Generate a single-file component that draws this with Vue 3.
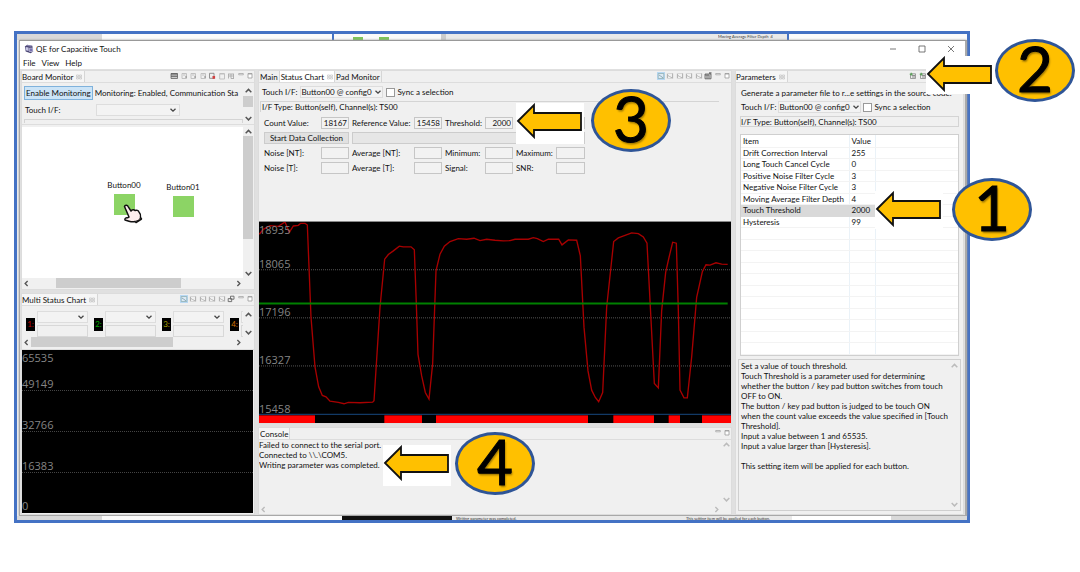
<script setup>
import { ref } from 'vue'

const sel = ref('Button00 @ config0')
const sync = ref(false)
const sync2 = ref(false)

const boardIcons = ['table', 'page', 'page', 'page', 'stop', 'page2', 'tree', 'min', 'max']
const chartIcons = ['active', 'wave', 'wave', 'wave', 'wave', 'export', 'min', 'max']
const multiIcons = ['active', 'wave', 'wave', 'wave', 'wave', 'windows', 'min', 'max']

const params = [
  ['Drift Correction Interval', '255'],
  ['Long Touch Cancel Cycle', '0'],
  ['Positive Noise Filter Cycle', '3'],
  ['Negative Noise Filter Cycle', '3'],
  ['Moving Average Filter Depth', '4'],
  ['Touch Threshold', '2000'],
  ['Hysteresis', '99'],
]
const measures = [
  ['Noise [NT]:', 'Average [NT]:', 'Minimum:', 'Maximum:'],
  ['Noise [T]:', 'Average [T]:', 'Signal:', 'SNR:'],
]
const channels = [
  { n: '1:', c: '#c00000' },
  { n: '2:', c: '#00b000' },
  { n: '3:', c: '#a8a000' },
  { n: '4:', c: '#d07000' },
]
const touchBars = [[0, 168], [376, 489], [531, 987], [1063, 1185], [1229, 1263], [1329, 1416]]
const curve = '28,70 40,55 60,44 85,46 105,33 118,64 130,45 145,43 152,37 165,37 172,42 183,320 195,470 206,530 217,556 228,560 240,573 265,577 282,581 295,577 330,578 368,576 372,572 390,290 404,145 415,131 430,120 448,106 460,108 483,108 493,117 499,280 504,432 515,497 526,547 537,567 548,460 558,180 570,130 583,106 600,92 625,83 650,85 672,82 690,89 710,85 735,88 760,90 780,89 795,85 835,85 850,80 862,83 880,92 895,85 926,85 936,102 955,87 980,88 991,135 1002,350 1014,482 1025,540 1036,562 1046,575 1058,547 1070,290 1091,92 1105,81 1145,66 1165,68 1180,78 1191,97 1213,520 1225,533 1235,300 1247,185 1257,140 1268,94 1279,97 1285,300 1290,540 1302,563 1312,563 1325,440 1340,260 1357,183 1368,162 1380,163 1398,156 1415,160 1433,161'
const help = `Set a value of touch threshold.
Touch Threshold is a parameter used for determining
whether the button / key pad button switches from touch
OFF to ON.
The button / key pad button is judged to be touch ON
when the count value exceeds the value specified in [Touch
Threshold].
Input a value between 1 and 65535.
Input a value larger than [Hysteresis].

This setting item will be applied for each button.`
const log = `Failed to connect to the serial port.
Connected to \\\\.\\COM5.
Writing parameter was completed.`
</script>

<template>
  <svg class="defs" aria-hidden="true">
    <symbol id="up" viewBox="0 0 8 8"><path d="M1.5 5.5 4 3l2.500 2.500" fill="none" stroke="currentColor" stroke-width="1.300" /></symbol>
    <symbol id="down" viewBox="0 0 8 8"><path d="M1.500 2.700 4 5.200l2.500-2.500" fill="none" stroke="currentColor" stroke-width="1.300" /></symbol>
    <symbol id="left" viewBox="0 0 8 8"><path d="M5 1.800 2.800 4 5 6.200" fill="none" stroke="currentColor" stroke-width="1.200" /></symbol>
    <symbol id="right" viewBox="0 0 8 8"><path d="M3 1.800 5.200 4 3 6.200" fill="none" stroke="currentColor" stroke-width="1.200" /></symbol>
    <symbol id="mark" viewBox="0 0 6 6"><path d="M.5 1h2v1.500h-2zM3.500 1h2v1.500h-2zM.5 3.500h2V5h-2zM3.500 3.500h2V5h-2z" fill="none" stroke="#bbb" stroke-width=".6" /></symbol>
    <symbol id="i-table" viewBox="0 0 8 8"><path d="M1 1.500h6.500v5H1z" fill="#ccc" stroke="#666" stroke-width=".8" /><path d="M1 2h6.500M1 4.200h6.500" stroke="#555" /></symbol>
    <symbol id="i-page" viewBox="0 0 8 8"><path d="M2 1.500h4.500v5H2zM3 3h2.500" fill="none" stroke="#bbb" stroke-width=".9" /><path d="M5 5h2" stroke="#888" /></symbol>
    <symbol id="i-page2" viewBox="0 0 8 8"><path d="M1.700 1.500h4.800v5.500H1.700zM2 2h4" fill="none" stroke="#bbb" stroke-width=".9" /></symbol>
    <symbol id="i-stop" viewBox="0 0 8 8"><path d="M1.500 1.300h4.500v5H1.500z" fill="#eee" stroke="#888" stroke-width=".9" /><path d="M4.500 4h2.600v2.800H4.500z" fill="#d04040" /></symbol>
    <symbol id="i-tree" viewBox="0 0 8 8"><path d="M1 2h6M2 4h5M1.500 2v4.500M4 2v4.500h3M6.500 2v4.500" fill="none" stroke="#aaa" stroke-width=".9" /></symbol>
    <symbol id="i-min" viewBox="0 0 8 8"><path d="M1.700 1.500h4.600v1.300H1.700z" fill="#fff" stroke="#999" stroke-width=".7" /></symbol>
    <symbol id="i-max" viewBox="0 0 8 8"><path d="M2 1.500h4v4.500H2zM2 2h4" fill="#fff" stroke="#999" stroke-width=".8" /></symbol>
    <symbol id="i-wave" viewBox="0 0 8 8"><path d="M1.200 1.500h5.600v5H1.200z" fill="none" stroke="#ccc" stroke-width=".7" /><path d="M1.500 2v4M2 3.500l1.500 1L6.500 6M6.500 1.500v4.500" fill="none" stroke="#aaa" stroke-width=".8" /></symbol>
    <symbol id="i-active" viewBox="0 0 8 8"><path d="M0 0h8v8H0z" fill="#b8d8f4" /><path d="M1.200 1.500h5.600v5H1.200z" fill="#dde9f3" stroke="#8aa" stroke-width=".7" /><path d="M2 3l1.500 1L6 5.800" fill="none" stroke="#79a" stroke-width=".8" /></symbol>
    <symbol id="i-export" viewBox="0 0 8 8"><path d="M1 2h6v4.800H1zM1 3h4M3 3v3.500M5 3v3.500" fill="#ddd" stroke="#555" stroke-width=".8" /><path d="M5 1h2.500" stroke="#333" /></symbol>
    <symbol id="i-windows" viewBox="0 0 8 8"><path d="M3.500 1.200H7v3H3.500zM1.200 3.600h3.500v3H1.200z" fill="#eee" stroke="#666" stroke-width=".9" /></symbol>
    <symbol id="i-gen" viewBox="0 0 8 8"><path d="M1.500 1.800h5v4.700h-5z" fill="#eee" stroke="#888" stroke-width=".8" /><path d="M3 3.500h3M3 5h3" stroke="#666" stroke-width=".7" /><path d="M.7 2.200h3M2.200.7v3" stroke="#4a9c4a" stroke-width=".9" /></symbol>
  </svg>

  <main class="page">
    <section class="frame">
      <div class="strip top">
        <i class="grey s1"></i><i class="blank s2"></i>
        <i class="greens"><b></b><b></b></i>
        <i class="grey s3"></i>
        <span class="tiny">Moving Average Filter Depth&nbsp; 4</span><i class="blank edge"></i>
      </div>

      <div class="window">
        <header class="title">
          <svg class="logo" viewBox="0 0 12 12"><path d="M1 3l3-2 6 1 1 7-3 2-6-2z" fill="#4a4674" /><path d="M2 3.500l3.500.8v4L2 7.500z" fill="#c9c7e6" /><path d="M6.500 5h4v4h-4z" fill="#7770b0" stroke="#dcdcf0" stroke-width=".7" /><path d="M4 1.800l5 .7" stroke="#aaa6d0" /></svg>
          <span>QE for Capacitive Touch</span>
          <div class="wbtns">
            <button aria-label="Minimize"><svg viewBox="0 0 8 8"><path d="M1 4h6" /></svg></button>
            <button aria-label="Maximize"><svg viewBox="0 0 8 8"><path d="M1 1h6v6H1z" /></svg></button>
            <button aria-label="Close"><svg viewBox="0 0 8 8"><path d="M1 1l6 6M7 1 1 7" /></svg></button>
          </div>
        </header>
        <nav class="menu"><button>File</button><button>View</button><button>Help</button></nav>

        <div class="work">
          <div class="col left">
            <section class="pane board">
              <div class="tabs">
                <button class="tab on">Board Monitor <svg class="mk"><use href="#mark" /></svg></button>
                <div class="icons nine"><svg v-for="(i, k) in boardIcons" :key="k"><use :href="'#i-' + i" /></svg></div>
              </div>
              <div class="bar-area">
                <div class="bar-body">
                  <div class="row"><button class="primary">Enable Monitoring</button><span>Monitoring: Enabled, Communication Sta</span></div>
                  <div class="row second"><label for="bif">Touch I/F:</label>
                    <span class="combo wide"><select id="bif"><option></option></select><svg><use href="#down" /></svg></span></div>
                  <div class="cutbox"></div>
                </div>
                <div class="vs"><svg><use href="#up" /></svg><i class="t1"></i><svg><use href="#down" /></svg></div>
              </div>
              <div class="canvas-wrap">
                <div class="canvas">
                  <div class="node n0"><span>Button00</span><i></i></div>
                  <div class="node n1"><span>Button01</span><i></i></div>
                  <svg class="hand" viewBox="0 0 20 20"><path d="M1.500 2.500C2 .5 4.500.8 5.300 2.800L8 7c1-1.500 3-1.700 4-.5 1.500-.8 3.500 0 4 1.500 1.500 1.500 1.700 3.500 1.500 5.500l1 1.500-5.500 3.500-1-1c-2 .8-4 .3-6-.3L2 16c-.7-1.500 1-2.500 2.500-2.200L6 13z" fill="#fdeeee" stroke="#111" stroke-width="1.500" stroke-linejoin="round" /><path d="M12.500 17c2 0 4-1.200 5-3.500" fill="none" stroke="#111" stroke-width=".8" /></svg>
                </div>
                <div class="vs"><svg><use href="#up" /></svg><i class="t2"></i><em></em><svg><use href="#down" /></svg></div>
                <div class="hs"><svg><use href="#left" /></svg><em class="h1"></em><i class="h2"></i><em class="h3"></em><svg><use href="#right" /></svg></div>
              </div>
            </section>
            <section class="pane multi">
              <div class="tabs">
                <button class="tab on">Multi Status Chart <svg class="mk"><use href="#mark" /></svg></button>
                <div class="icons eight"><svg v-for="(i, k) in multiIcons" :key="k"><use :href="'#i-' + i" /></svg></div>
              </div>
              <div class="channels">
                <div class="chs">
                  <div v-for="c in channels" :key="c.n" class="ch">
                    <label :for="'ch' + c.n" :style="{ color: c.c }">{{ c.n }}</label>
                    <div class="chf">
                      <span class="combo"><select :id="'ch' + c.n"><option></option></select><svg><use href="#down" /></svg></span>
                      <div class="under"></div>
                    </div>
                  </div>
                </div>
                <div class="vs"><svg><use href="#up" /></svg><em></em><svg><use href="#down" /></svg></div>
                <div class="hs"><svg><use href="#left" /></svg><i class="m1"></i><em class="m2"></em><svg><use href="#right" /></svg></div>
              </div>
              <div class="plot mplot">
                <svg class="fill" viewBox="0 0 231 163" preserveAspectRatio="none"><path d="M0 40.500h231M0 81.500h231M0 122.500h231" stroke="#444" stroke-width="1" stroke-dasharray="1 1" /></svg>
                <div class="scale"><span>65535</span><span>49149</span><span>32766</span><span>16383</span><span>0</span></div>
              </div>
            </section>
          </div>

          <div class="col mid">
            <section class="pane status">
              <div class="tabs">
                <button class="tab">Main</button><button class="tab on white">Status Chart <svg class="mk"><use href="#mark" /></svg></button><button class="tab">Pad Monitor</button>
                <div class="icons eight"><svg v-for="(i, k) in chartIcons" :key="k"><use :href="'#i-' + i" /></svg></div>
              </div>
              <div class="status-body">
                <div class="row ifrow"><label for="sif">Touch I/F:</label>
                  <span class="combo cfg"><select id="sif" v-model="sel"><option>Button00 @ config0</option></select><svg><use href="#down" /></svg></span>
                  <label class="chk"><input v-model="sync" type="checkbox">Sync a selection</label></div>
                <div class="type">I/F Type: Button(self), Channel(s): TS00</div>
                <div class="grid">
                  <label for="cv">Count Value:</label><input id="cv" readonly value="18167">
                  <label for="rv">Reference Value:</label><input id="rv" readonly value="15458">
                  <label for="th">Threshold:</label><input id="th" readonly value="2000">
                  <span></span><input aria-label="Status" readonly>
                  <button class="start">Start Data Collection</button><div class="progress"></div>
                  <template v-for="(r, i) in measures" :key="i">
                    <template v-for="m in r" :key="m"><label :for="m">{{ m }}</label><input :id="m" readonly></template>
                  </template>
                </div>
              </div>
              <div class="plot splot">
                <svg class="fill" viewBox="0 0 1416 606" preserveAspectRatio="none">
                  <path d="M0 144h1416M0 289h1416M0 434h1416" stroke="#555" stroke-width="3" stroke-dasharray="3 3" />
                  <path d="M0 580h1416" stroke="#123a66" stroke-width="4" />
                  <polyline transform="translate(-27 -33)" :points="curve" fill="none" stroke="#a80000" stroke-width="4" />
                  <path d="M0 246h1406" stroke="#008000" stroke-width="6" />
                  <rect v-for="b in touchBars" :key="b[0]" :x="b[0]" y="583" :width="b[1] - b[0]" height="23" fill="#f00" />
                </svg>
                <div class="scale"><span>18935</span><span>18065</span><span>17196</span><span>16327</span><span>15458</span></div>
              </div>
            </section>
            <section class="pane console">
              <div class="tabs"><button class="tab on">Console</button>
                <div class="icons two"><svg><use href="#i-min" /></svg><svg><use href="#i-max" /></svg></div></div>
              <div class="console-body">
                <div class="log">{{ log }}</div>
                <div class="vs faint"><svg><use href="#up" /></svg><em></em><svg><use href="#down" /></svg></div>
                <div class="hs faint"><svg><use href="#left" /></svg><em></em><svg><use href="#right" /></svg></div>
              </div>
            </section>
          </div>

          <div class="col right">
            <section class="pane params">
              <div class="tabs"><button class="tab on">Parameters <svg class="mk"><use href="#mark" /></svg></button>
                <div class="icons gen"><svg><use href="#i-gen" /></svg><svg><use href="#i-gen" /></svg></div></div>
              <div class="params-body">
                <div class="gtext">Generate a parameter file to r...e settings in the source code.</div>
                <div class="row"><label for="pif">Touch I/F:</label>
                  <span class="combo cfg"><select id="pif" v-model="sel"><option>Button00 @ config0</option></select><svg><use href="#down" /></svg></span>
                  <label class="chk"><input v-model="sync2" type="checkbox">Sync a selection</label></div>
                <div class="type">I/F Type: Button(self), Channel(s): TS00</div>
                <div class="tbox">
                  <table>
                    <thead><tr><th class="c1">Item</th><th class="c2">Value</th><th></th></tr></thead>
                    <tbody>
                      <tr v-for="p in params" :key="p[0]" :class="{ picked: p[0] === 'Touch Threshold' }"><td>{{ p[0] }}</td><td>{{ p[1] }}</td><td></td></tr>
                      <tr v-for="n in 11" :key="n"><td></td><td></td><td></td></tr>
                    </tbody>
                  </table>
                </div>
                <div class="help">
                  <div class="log">{{ help }}</div>
                  <div class="vs faint"><svg><use href="#up" /></svg><em></em><svg><use href="#down" /></svg></div>
                </div>
              </div>
            </section>
          </div>
        </div>
      </div>

      <div class="strip bottom">
        <i class="grey s1"></i><i class="blank b2"></i><i class="black"></i>
        <span class="tiny t4">Writing parameter was completed.</span><span class="tiny t5">This setting item will be applied for each button.</span><i class="blank b3"></i><i class="grey b4"></i>
      </div>
    </section>

    <div v-for="n in 4" :key="n" :class="['callout', 'k' + n]">
      <svg viewBox="0 0 68 36"><path d="M2 18 18 2v8h47v17H18v7z" fill="#ffc000" stroke="#111" stroke-width="1.800" /></svg>
    </div>
    <div v-for="n in 4" :key="'b' + n" :class="['ball', 'o' + n]">{{ n }}</div>
  </main>
</template>

<style>
html, body { background: #fff; }
body { overflow: hidden; }
</style>

<style scoped>
* { box-sizing: border-box; }
.defs { position: absolute; width: 0; height: 0; }
.page { position: relative; display: flex; min-height: 100vh; padding: 31px 110px 50px 14px; font: 8px/10px Lato, "Open Sans", sans-serif; color: #111; }
.frame { flex: 1; display: flex; flex-direction: column; border: 3px solid #4472c4; background: #f0f0f0; min-width: 0; }
button, input, select { font: inherit; color: inherit; margin: 0; padding: 0; border: 0; background: none; border-radius: 0; }
input, select { min-width: 0; }
svg { display: block; flex: none; }

.strip { display: flex; height: 6px; overflow: hidden; background: #e9e9e9; }
.strip.bottom { height: 4px; }
.grey { background: #d9d9d9; }
.blank { background: #fbfbfb; }
.s1 { width: 85px; }
.s2 { width: 232px; border-right: 2px solid #4472c4; }
.greens { width: 107px; display: flex; gap: 16px; padding: 3px 0 0 19px; background: #fafafa; }
.greens b { width: 10px; background: #7cc458; }
.s3 { width: 5px; background: #ccc; margin-right: 272px; }
.tiny { font-size: 4px; line-height: 5px; white-space: nowrap; overflow: hidden; color: #333; }
.edge { flex: 1; border-left: 2px solid #4472c4; margin-left: 14px; }
.b2 { width: 240px; }
.black { width: 110px; background: #111; }
.t4 { width: 230px; padding-left: 4px; }
.t5 { width: 110px; padding-left: 4px; }
.b3 { width: 99px; background: #fff; }
.b4 { flex: 1; }

.window { flex: 1; display: flex; flex-direction: column; margin-left: 2px; background: #fff; border: 1px solid #a8a8a8; border-top-color: #999; border-right: 2px solid #aaa; box-shadow: 0 0 2px #999; min-height: 0; }
.title { display: flex; align-items: center; height: 16px; padding: 0 10px 0 4px; }
.logo { width: 10px; height: 10px; margin-right: 2px; }
.wbtns { margin-left: auto; display: flex; gap: 21px; }
.wbtns svg { width: 8px; height: 8px; fill: none; stroke: #555; stroke-width: 0.8; }
.menu { display: flex; gap: 6px; height: 12px; padding-left: 3px; }
.work { flex: 1; display: flex; gap: 3px; padding: 1px 1px 0 1px; background: #e0e0e0; min-height: 0; }
.col { display: flex; flex-direction: column; gap: 3px; min-width: 0; }
.left { flex: 234; }
.mid { flex: 474; }
.right { flex: 229; }
.pane { display: flex; flex-direction: column; background: #f0f0f0; border: 1px solid #dcdcdc; min-height: 0; }
.board { flex: none; height: 220px; }
.multi, .params { flex: 1; }
.tabs { display: flex; align-items: stretch; height: 12px; border-bottom: 1px solid #ddd; }
.tab { display: flex; align-items: center; gap: 3px; padding: 0 2px 0 0; border-right: 1px solid #d6d6d6; white-space: nowrap; }
.tab.on { background: #f6f6f6; }
.mid .tab { padding: 0 1px; }
.tab.white { background: #fff; }
.mk { width: 6px; height: 6px; }
.icons { margin-left: auto; display: flex; justify-content: space-between; padding-top: 1px; }
.icons svg { width: 8px; height: 8px; }
.nine { width: 84px; }
.eight { width: 74px; }
.two { width: 17px; }
.gen { width: 18px; margin-right: 36px; }

.row { display: flex; align-items: center; gap: 3px; white-space: nowrap; }
.combo { display: flex; align-items: center; height: 12px; border: 1px solid #ddd; background: #f3f3f3; }
.combo select { flex: 1; appearance: none; height: 10px; line-height: 10px; outline: none; }
.combo svg { width: 8px; height: 8px; color: #444; }
.vs { display: flex; flex-direction: column; align-items: center; background: #f0f0f0; color: #555; }
.vs svg, .hs svg { width: 9px; height: 9px; }
.vs i { width: 100%; background: #cdcdcd; }
.vs em, .hs em { flex: 1; }
.hs { display: flex; align-items: center; background: #f0f0f0; color: #555; }
.hs i { align-self: stretch; background: #cdcdcd; }
.faint, .hs.faint { color: #bbb; }

.bar-area { display: flex; height: 42px; padding: 3px 1px 1px 2px; border-bottom: 1px solid #ddd; }
.bar-body { flex: 1; min-width: 0; overflow: hidden; }
.bar-body .row { gap: 2px; }
.primary { height: 14px; padding: 0 1px; background: #cce4f7; border: 1px solid #7fb2dc; }
.second { margin-top: 4px; }
.second label { width: 70px; padding-left: 1px; }
.wide { width: 84px; }
.wide select { width: 70px; }
.wide svg { margin-right: 2px; }
.cutbox { height: 12px; margin-top: 3px; border: 1px solid #d4d4d4; }
.bar-area .vs { width: 10px; justify-content: space-between; }
.t1 { height: 11px; margin-bottom: 7px; }
.canvas-wrap { flex: 1; display: grid; grid-template: 1fr 10px / 1fr 10px; margin: 2px 1px 1px 0; min-height: 0; }
.canvas { position: relative; background: #fff; overflow: hidden; }
.node { position: absolute; display: flex; flex-direction: column; align-items: center; gap: 4px; width: 40px; }
.node i { width: 21px; height: 21px; background: #8cd465; }
.n0 { left: 82px; top: 53px; }
.n1 { left: 141px; top: 55px; }
.hand { position: absolute; left: 101px; top: 77px; width: 20px; height: 20px; }
.t2 { height: 103px; }
.hs i.h2 { flex: 124; }
.hs em.h1 { flex: 25; }
.hs em.h3 { flex: 52; }
.channels { display: grid; grid-template: 1fr 10px / 1fr 10px; height: 44px; padding: 4px 1px 2px 0; border-bottom: 1px solid #ddd; }
.chs { display: flex; gap: 6px; padding: 1px 0 0 4px; overflow: hidden; }
.ch { flex: none; display: flex; gap: 2px; width: 62px; }
.ch label { width: 9px; height: 13px; margin-top: 7px; background: #000; line-height: 13px; text-align: center; }
.chf { flex: 1; display: flex; flex-direction: column; gap: 2px; min-width: 0; }
.under { height: 14px; border: 1px solid #d8d8d8; }
.chf .combo svg { margin-right: 2px; }
.channels .hs { grid-column: 1 / 2; }
.hs i.m1 { flex: 141; }
.hs em.m2 { flex: 60; }

.plot { position: relative; background: #000; overflow: hidden; font-size: 11px; line-height: 15px; font-family: "Open Sans", "Noto Sans", sans-serif; color: #858585; }
.fill { position: absolute; inset: 0; width: 100%; height: 100%; }
.scale { position: relative; display: grid; height: 100%; }
.mplot { flex: 1; margin: 0 1px 1px 0; }
.mplot .scale { grid-template-rows: 26fr 41fr 41fr 40fr 15fr; }
.splot { flex: 1; border-top: 1px solid #888; }
.splot .scale { grid-template-rows: 34fr 48fr 48fr 49fr 22fr; }
.status { flex: 1; }
.status-body { height: 138px; padding: 3px 12px 0 4px; }
.chk { display: flex; align-items: center; gap: 2px; }
.chk input { appearance: none; width: 9px; height: 9px; border: 1px solid #999; background: #fff; }
.cfg { width: 83px; }
.ifrow { margin-left: -1px; }
.type { height: 11px; margin-top: 3px; line-height: 10px; border: 1px solid #d4d4d4; border-width: 1px 0 0 1px; white-space: nowrap; }
.status .type { margin: 3px 0 0 -3px; padding-left: 1px; }
.grid { display: grid; grid-template-columns: 54px 28px 59px 28px 37px 28px 37px 29px; gap: 3px; grid-auto-rows: 12px; align-items: center; margin-top: 5px; padding-left: 1px; white-space: nowrap; }
.grid input { width: 100%; height: 12px; border: 1px solid #c6c6c6; text-align: right; padding-right: 1px; background: #f2f2f2; }
.start { grid-column: 1 / 3; height: 12px; background: #e1e1e1; border: 1px solid #ccc; }
.progress { grid-column: 3 / 9; height: 12px; background: #e6e6e6; border: 1px solid #ccc; }
.console { height: 88px; }
.console-body { flex: 1; display: grid; grid-template: 1fr 10px / 1fr 10px; }
.log { white-space: pre; overflow: hidden; }

.params-body { flex: 1; display: flex; flex-direction: column; padding: 5px 4px 3px 4px; min-height: 0; }
.gtext { padding-left: 1px; white-space: nowrap; overflow: hidden; }
.params .row { margin-top: 3px; padding-left: 1px; gap: 2px; }
.params .type { border-width: 1px; margin-top: 3px; }
.tbox { flex: 1; margin-top: 7px; background: #fff; border: 1px solid #cfcfcf; min-height: 0; overflow: hidden; }
table { width: 100%; border-collapse: collapse; table-layout: fixed; }
th, td { padding: 0 2px; height: 11px; line-height: 10px; text-align: left; font-weight: 400; white-space: nowrap; border-right: 1px solid #eaf2f8; border-bottom: 1px solid #f3f3f3; }
th, tr:nth-child(even) td { height: 12px; }
th:last-child, td:last-child { border-right: 0; }
.c1 { width: 108px; }
.c2 { width: 26px; }
.picked td:not(:last-child) { background: #d9d9d9; border-color: #d9d9d9; }
.help { flex: none; height: 152px; display: flex; justify-content: space-between; margin: 3px -2px 0 -2px; padding: 1px; border: 1px solid #cfcfcf; }
.help .log { padding-left: 1px; }

.callout { position: absolute; width: 68px; height: 41px; background: #fff; }
.callout svg { width: 68px; height: 36px; }
.k1 { left: 875px; top: 191px; height: 38px; }
.k2 { left: 926px; top: 56px; height: 38px; }
.k3 { left: 516px; top: 103px; }
.k4 { left: 383px; top: 445px; }
.ball { position: absolute; width: 80px; height: 63px; border: 3px solid #2f5597; border-radius: 50%; background: #ffc000; color: #000; font-size: 62px; line-height: 52px; text-align: center; -webkit-text-stroke: 1px #000; text-shadow: 1px 2px 2px rgba(0, 0, 0, 0.4); }
.o1 { left: 952px; top: 178px; }
.o2 { left: 995px; top: 39px; }
.o3 { left: 591px; top: 89px; }
.o4 { left: 455px; top: 432px; }
</style>
